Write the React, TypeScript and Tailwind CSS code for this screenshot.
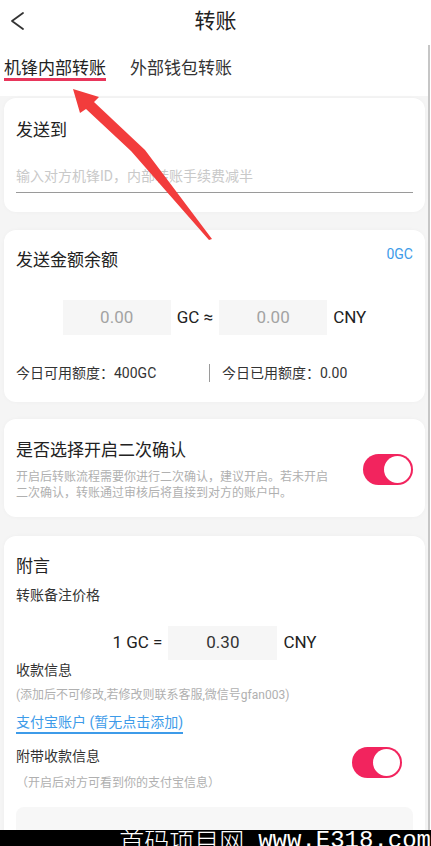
import * as React from 'react';

function Toggle() {
  return (
    <div className="w-[50px] h-[31px] rounded-full bg-[#f2245e] p-[2px] flex justify-end">
      <div className="w-[27px] h-[27px] rounded-full bg-white" />
    </div>
  );
}

function Card({ className, children }: { className?: string; children: React.ReactNode }) {
  return (
    <div className={'bg-white rounded-[12px] px-[12px] shadow-[0_0_4px_rgba(0,0,0,0.03)] ' + (className ?? '')}>
      {children}
    </div>
  );
}

export default function App() {
  return (
    <div className="relative w-[431px] h-[846px] overflow-hidden bg-white text-[#222] font-['Roboto','Noto_Sans_CJK_SC',sans-serif]">
      {/* Header */}
      <div className="relative h-[44px] pt-[7px]">
        <svg className="absolute left-[8px] top-[10px]" width="20" height="22" viewBox="0 0 20 22">
          <polyline points="15,3 4,11 15,19" fill="none" stroke="#333" strokeWidth="1.8" strokeLinecap="round" strokeLinejoin="round" />
        </svg>
        <div className="text-center text-[21px] leading-[28px] text-[#222]">转账</div>
      </div>

      <div className="flex">
        <div className="w-[428px]">
          {/* Tabs */}
          <div className="h-[52px] pt-[14px] px-[4px] flex gap-[24px] bg-white">
            <div className="text-[17px] leading-[20px] text-[#222] border-b-[3px] border-[#e8365b] self-start">机锋内部转账</div>
            <div className="text-[17px] leading-[20px] text-[#333]">外部钱包转账</div>
          </div>

          <div className="bg-[#f5f5f5] pl-[4px] pr-[3px] pt-[2px] h-[800px]">
            {/* Send to */}
            <Card className="pt-[20px] pb-[19px]">
              <div className="text-[17px] leading-[24px]">发送到</div>
              <div className="mt-[22px] h-[29px] border-b border-[#9a9a9a] text-[14px] leading-[24px] text-[#c9c9c9]">
                输入对方机锋ID，内部转账手续费减半
              </div>
            </Card>

            {/* Amount */}
            <Card className="mt-[18px] pt-[18px] pb-[19px]">
              <div className="flex justify-between items-start">
                <div className="text-[17px] leading-[24px]">发送金额余额</div>
                <div className="text-[14px] leading-[16px] -mt-[2px] text-[#3d9be9]">0GC</div>
              </div>
              <div className="mt-[28px] flex justify-center items-center gap-[6px] text-[17px]">
                <div className="w-[108px] h-[35px] bg-[#f6f6f6] flex items-center justify-center text-[#a3a3a3]">0.00</div>
                <div>GC ≈</div>
                <div className="w-[108px] h-[35px] bg-[#f6f6f6] flex items-center justify-center text-[#a3a3a3]">0.00</div>
                <div>CNY</div>
              </div>
              <div className="mt-[28px] flex items-center text-[14px] leading-[20px] text-[#333]">
                <div className="w-[193px]">今日可用额度：400GC</div>
                <div className="w-px h-[18px] bg-[#9a9a9a]" />
                <div className="pl-[12px]">今日已用额度：0.00</div>
              </div>
            </Card>

            {/* Second confirm */}
            <Card className="mt-[17px] pt-[19px] pb-[16px] flex items-center justify-between">
              <div>
                <div className="text-[17px] leading-[24px]">是否选择开启二次确认</div>
                <div className="mt-[8px] text-[12px] leading-[15.5px] text-[#b0b0b0]">
                  开启后转账流程需要你进行二次确认，建议开启。若未开启
                  <br />
                  二次确认，转账通过审核后将直接到对方的账户中。
                </div>
              </div>
              <Toggle />
            </Card>

            {/* Remark */}
            <Card className="mt-[19px] pt-[18px] pb-[20px]">
              <div className="text-[17px] leading-[24px]">附言</div>
              <div className="mt-[7px] text-[14px] leading-[20px] text-[#333]">转账备注价格</div>
              <div className="mt-[21px] flex justify-center items-center gap-[6px] text-[17px]">
                <div>1 GC =</div>
                <div className="w-[109px] h-[34px] bg-[#f6f6f6] flex items-center justify-center text-[#333]">0.30</div>
                <div>CNY</div>
              </div>
              <div className="text-[14px] leading-[20px] text-[#333]">收款信息</div>
              <div className="mt-[7px] text-[12px] leading-[16px] text-[#b0b0b0]">(添加后不可修改,若修改则联系客服,微信号gfan003)</div>
              <div className="mt-[7px]">
                <span className="inline-block text-[14px] leading-[20px] text-[#3d9be9] border-b-2 border-[#3d9be9]">支付宝账户 (暂无点击添加)</span>
              </div>
              <div className="mt-[12px] flex justify-between items-start">
                <div>
                  <div className="text-[14px] leading-[20px] text-[#333]">附带收款信息</div>
                  <div className="mt-[9px] text-[12px] leading-[16px] text-[#b0b0b0]">（开启后对方可看到你的支付宝信息）</div>
                </div>
                <div className="mr-[11px] mt-[1px]">
                  <Toggle />
                </div>
              </div>
              <div className="mt-[16px] h-[60px] rounded-[8px] bg-[#f7f7f7]" />
            </Card>
          </div>
        </div>
        {/* scrollbar */}
        <div className="w-[2px] h-[802px] mt-[1px] bg-[#c6c6c6]" />
        <div className="w-px bg-white" />
      </div>

      {/* annotation arrow */}
      <svg className="absolute left-0 top-0 pointer-events-none" width="431" height="846" viewBox="0 0 431 846">
        <polygon
          points="73,89 99,97 94,102 145,150 212,239 209,240 131,151 86,109 80,113"
          fill="#f23c3c"
        />
      </svg>

      {/* watermark */}
      <div className="absolute left-0 right-0 bottom-0 h-[16px] bg-black" />
      <div className="absolute right-0 bottom-[-7px] flex items-end gap-[14px] text-white leading-none">
        <span className="text-[25px] font-light font-['Noto_Sans_CJK_SC',sans-serif]">首码项目网</span>
        <span className="text-[24px] font-['Liberation_Mono',monospace]">www.E318.com</span>
      </div>
    </div>
  );
}
